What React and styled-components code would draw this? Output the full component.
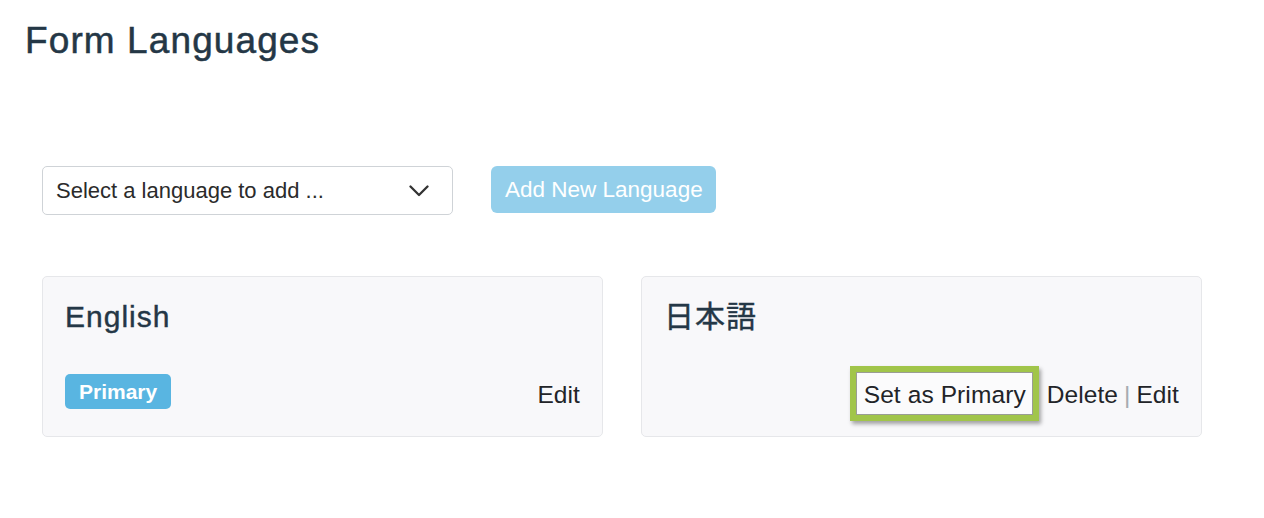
import React from "react";
import styled, { createGlobalStyle } from "styled-components";

const GlobalStyle = createGlobalStyle`
  body {
    margin: 0;
    background: #ffffff;
    font-family: "Liberation Sans", Arial, "Noto Sans CJK JP", sans-serif;
  }
`;

const Page = styled.div`
  padding: 19px 25px 0;
`;

const Title = styled.h1`
  margin: 0;
  font-size: 37px;
  line-height: 44px;
  font-weight: 400;
  letter-spacing: 1.1px;
  -webkit-text-stroke: 0.5px #243746;
  color: #243746;
`;

const Content = styled.div`
  padding-left: 17px;
  width: 1160px;
`;

const Toolbar = styled.div`
  margin-top: 103px;
  display: flex;
  align-items: flex-start;
  gap: 38px;
`;

const Select = styled.div`
  box-sizing: border-box;
  width: 411px;
  height: 49px;
  border: 1px solid #cfd3d7;
  border-radius: 5px;
  background: #fff;
  display: flex;
  align-items: center;
  justify-content: space-between;
  padding: 0 23px 0 13px;
  font-size: 22px;
  color: #2b2b2b;
`;

const AddButton = styled.button`
  height: 47px;
  border: none;
  border-radius: 6px;
  background: #94cfeb;
  color: #ffffff;
  font-family: inherit;
  font-size: 22.5px;
  padding: 0 13px 0 14px;
  cursor: default;
`;

const Cards = styled.div`
  margin-top: 61px;
  display: grid;
  grid-template-columns: 1fr 1fr;
  gap: 38px;
`;

const Card = styled.div`
  box-sizing: border-box;
  height: 161px;
  border: 1px solid #e6e7ea;
  border-radius: 5px;
  background: #f8f8fa;
  padding: 23px 22px 27px;
  display: flex;
  flex-direction: column;
`;

const Name = styled.div`
  font-size: 30px;
  line-height: 34px;
  letter-spacing: 1px;
  -webkit-text-stroke: 0.4px #243746;
  color: #243746;
`;

const Row = styled.div`
  margin-top: auto;
  height: 35px;
  display: flex;
  align-items: flex-end;
  justify-content: ${p => (p.$primary ? "space-between" : "flex-end")};
`;

const Badge = styled.span`
  display: inline-block;
  height: 35px;
  line-height: 35px;
  padding: 0 14px;
  border-radius: 5px;
  background: #59b5e1;
  color: #ffffff;
  font-weight: 700;
  font-size: 21px;
`;

const Actions = styled.div`
  font-size: 24.5px;
  line-height: 28px;
  letter-spacing: 0.1px;
  color: #222428;
  white-space: nowrap;
`;

const Highlight = styled.span`
  display: inline-block;
  margin: -15px 1px -12px 0;
  padding: 9px 7px 6px 8px;
  line-height: 28px;
  border: 6px solid #a1c54a;
  background: #fbfbfc;
  box-shadow: inset 0 0 0 1px #9a9d94, 2px 3px 4px rgba(0, 0, 0, 0.35);
`;

const Sep = styled.span`
  margin: 0 -1px;
  color: #a7abb0;
`;

const Chevron = () => (
  <svg width="20" height="12" viewBox="0 0 20 12">
    <polyline points="1.5,1.5 10,10 18.5,1.5" fill="none" stroke="#333" strokeWidth="2.3" strokeLinecap="round" strokeLinejoin="round" />
  </svg>
);

export default function App() {
  return (
    <Page>
      <GlobalStyle />
      <Title>Form Languages</Title>
      <Content>
        <Toolbar>
          <Select>
            <span>Select a language to add ...</span>
            <Chevron />
          </Select>
          <AddButton>Add New Language</AddButton>
        </Toolbar>
        <Cards>
          <Card>
            <Name>English</Name>
            <Row $primary>
              <Badge>Primary</Badge>
              <Actions>Edit</Actions>
            </Row>
          </Card>
          <Card>
            <Name>日本語</Name>
            <Row>
              <Actions>
                <Highlight>Set as Primary</Highlight> Delete <Sep>|</Sep> Edit
              </Actions>
            </Row>
          </Card>
        </Cards>
      </Content>
    </Page>
  );
}
